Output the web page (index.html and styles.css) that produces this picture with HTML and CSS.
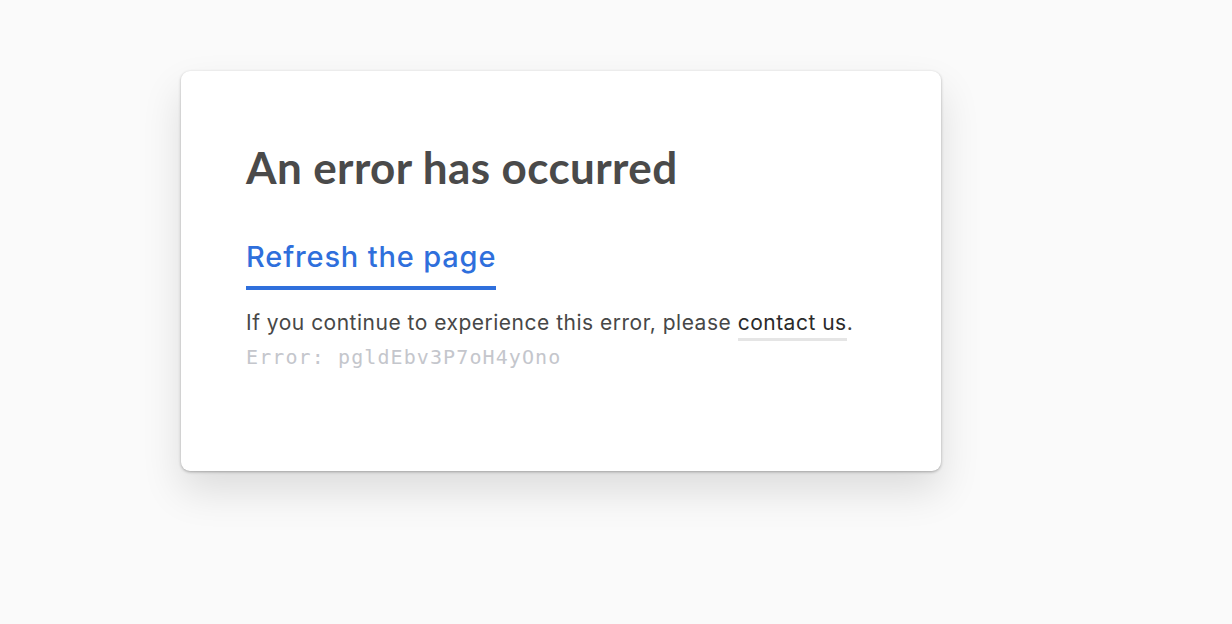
FILE: index.html
```html
<!DOCTYPE html>
<html lang="en">
<head>
<meta charset="utf-8">
<title>An error has occurred</title>
<link rel="stylesheet" href="styles.css">
</head>
<body>
<main class="page">
  <section class="card">
    <h1 class="title">An error has occurred</h1>
    <a class="refresh" href="#">Refresh the page</a>
    <p class="message">If you continue to experience this error, please <a class="contact" href="#">contact us</a>.</p>
    <p class="code">Error: pgldEbv3P7oH4yOno</p>
  </section>
</main>
</body>
</html>
```
FILE: styles.css
```css
html, body {
  margin: 0;
  padding: 0;
  background: #fafafa;
}
body {
  min-height: 100vh;
}
.page {
  padding: 71px 0 0 181px;
}
.card {
  box-sizing: border-box;
  width: 760px;
  height: 400px;
  background: #fff;
  border-radius: 9px;
  box-shadow: 0 1px 3px rgba(0,0,0,0.3), 0 20px 40px rgba(0,0,0,0.12);
  padding: 74px 0 0 65px;
  display: flex;
  flex-direction: column;
  align-items: flex-start;
}
.title {
  margin: 0;
  font-family: Lato, "Noto Sans", sans-serif;
  font-weight: 700;
  font-size: 44px;
  line-height: 1;
  color: #4a4a4a;
  letter-spacing: 0.4px;
}
.refresh {
  margin-top: 53px;
  font-family: Inter, Roboto, sans-serif;
  font-weight: 500;
  font-size: 29px;
  line-height: 1;
  letter-spacing: 0.85px;
  color: #2f6fdc;
  text-decoration: none;
  padding-bottom: 15px;
  border-bottom: 4px solid #2f6fdc;
}
.message {
  margin: 22px 0 0;
  font-family: Inter, Roboto, sans-serif;
  font-size: 21px;
  line-height: 1;
  letter-spacing: 0.5px;
  color: #474747;
}
.contact {
  color: #2a2a2a;
  text-decoration: none;
  display: inline-block;
  padding-bottom: 5px;
  border-bottom: 3px solid #e5e5e5;
}
.code {
  margin: 6px 0 0;
  font-family: "DejaVu Sans Mono", "Liberation Mono", monospace;
  font-size: 20px;
  line-height: 1;
  letter-spacing: 1.1px;
  color: #c4c6cc;
}
```
